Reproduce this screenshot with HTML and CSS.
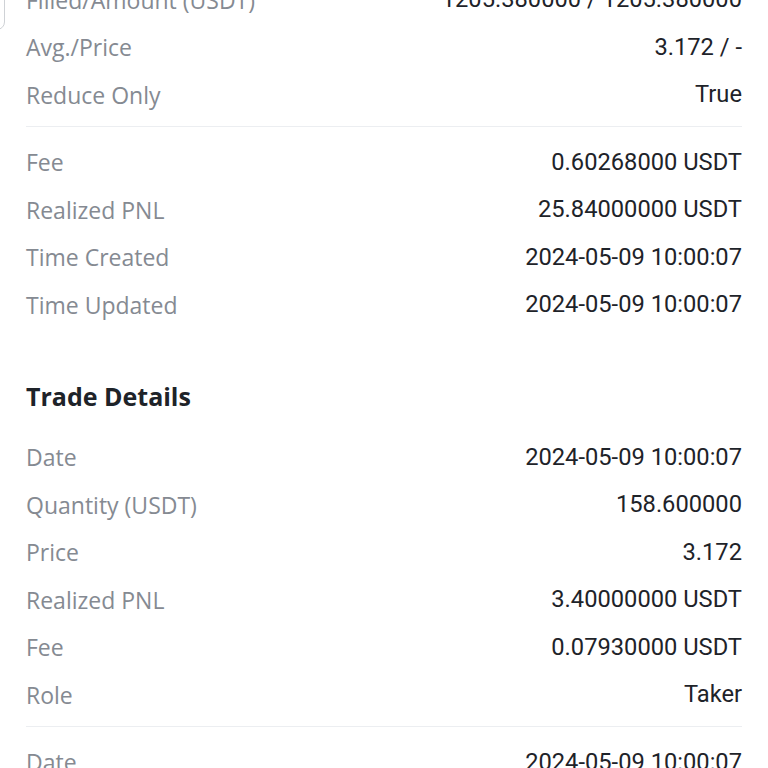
FILE: index.html
```html
<!DOCTYPE html>
<html>
<head>
<meta charset="utf-8">
<link rel="stylesheet" href="styles.css">
</head>
<body>
<div class="edge-card"></div>
<main class="page">
  <section class="group first">
    <div class="row"><span class="label">Filled/Amount (USDT)</span><span class="value">1205.380000 / 1205.380000</span></div>
    <div class="row"><span class="label">Avg./Price</span><span class="value">3.172 / -</span></div>
    <div class="row"><span class="label">Reduce Only</span><span class="value">True</span></div>
  </section>
  <hr class="divider">
  <section class="group">
    <div class="row"><span class="label">Fee</span><span class="value">0.60268000 USDT</span></div>
    <div class="row"><span class="label">Realized PNL</span><span class="value">25.84000000 USDT</span></div>
    <div class="row"><span class="label">Time Created</span><span class="value">2024-05-09 10:00:07</span></div>
    <div class="row"><span class="label">Time Updated</span><span class="value">2024-05-09 10:00:07</span></div>
  </section>
  <h2 class="heading">Trade Details</h2>
  <section class="group">
    <div class="row"><span class="label">Date</span><span class="value">2024-05-09 10:00:07</span></div>
    <div class="row"><span class="label">Quantity (USDT)</span><span class="value">158.600000</span></div>
    <div class="row"><span class="label">Price</span><span class="value">3.172</span></div>
    <div class="row"><span class="label">Realized PNL</span><span class="value">3.40000000 USDT</span></div>
    <div class="row"><span class="label">Fee</span><span class="value">0.07930000 USDT</span></div>
    <div class="row"><span class="label">Role</span><span class="value">Taker</span></div>
  </section>
  <hr class="divider">
  <section class="group">
    <div class="row"><span class="label">Date</span><span class="value">2024-05-09 10:00:07</span></div>
  </section>
</main>
</body>
</html>
```

FILE: styles.css
```css
html, body {
  margin: 0;
  padding: 0;
  background: #ffffff;
  overflow: hidden;
  height: 768px;
}
body {
  position: relative;
  font-family: "Open Sans", "Noto Sans", sans-serif;
}
.edge-card {
  position: absolute;
  left: -40px;
  top: -20px;
  width: 45px;
  height: 50px;
  border: 1px solid #cfd2d6;
  border-radius: 8px;
  box-sizing: border-box;
}
.page {
  padding: 0 26px;
}
.group.first {
  margin-top: -23.75px;
}
.row {
  display: flex;
  justify-content: space-between;
  align-items: center;
  height: 47.5px;
}
.label {
  color: #858a92;
  font-size: 23px;
  line-height: 1;
  font-family: "Open Sans", "Noto Sans", sans-serif;
}
.value {
  color: #1e2329;
  font-size: 23.7px;
  line-height: 1;
  font-family: Roboto, "Liberation Sans", sans-serif;
}
.divider {
  border: 0;
  height: 1px;
  background: #eceef1;
  margin: 7px 0 12px;
}
.heading {
  margin: 39px 0 10px;
  height: 56px;
  display: flex;
  align-items: center;
  font-size: 25px;
  font-weight: 700;
  color: #1e2329;
  font-family: "Open Sans", "Noto Sans", sans-serif;
}
```
